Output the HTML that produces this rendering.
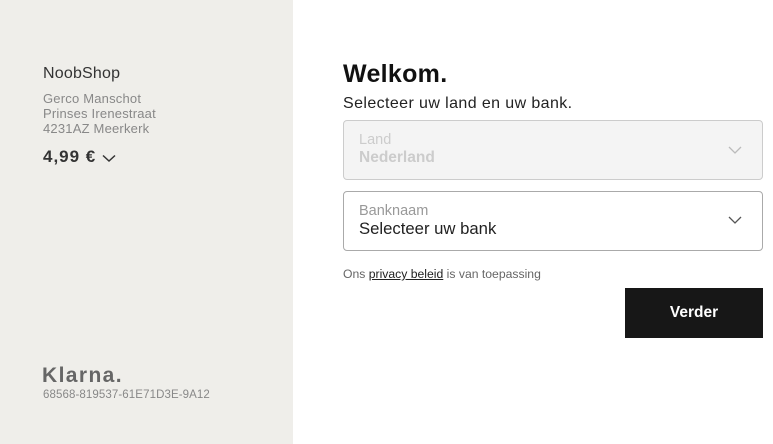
<!DOCTYPE html>
<html><head><meta charset="utf-8"><style>
*{margin:0;padding:0;box-sizing:border-box}
body{width:773px;height:444px;overflow:hidden;font-family:"Liberation Sans",sans-serif;background:#fff;position:relative}
.left{position:absolute;left:0;top:0;width:293px;height:444px;background:#efeeea}
.a{position:absolute;white-space:nowrap}
.box{position:absolute;left:343px;width:420px;border:1px solid #bbb;border-radius:4px}
.chev{position:absolute;right:20px;width:14px;height:8px}
</style></head><body>
<div class="left"></div>
<div class="a" style="left:43px;top:65px;font-size:16px;color:#333;letter-spacing:0.2px">NoobShop</div>
<div class="a" style="left:43px;top:91px;font-size:13px;color:#888;line-height:15px;letter-spacing:0.2px">Gerco Manschot<br>Prinses Irenestraat<br>4231AZ Meerkerk</div>
<div class="a" style="left:43px;top:147px;font-size:17px;font-weight:bold;color:#333;letter-spacing:1px">4,99 €</div>
<svg class="a" style="left:102px;top:154px" width="14" height="9" viewBox="0 0 14 9"><path d="M1 1.5L7 7L13 1.5" fill="none" stroke="#333" stroke-width="1.5"/></svg>
<div class="a" style="left:42px;top:364px;font-size:21px;font-weight:bold;color:#666;letter-spacing:1.4px">Klarna.</div>
<div class="a" style="left:43px;top:389px;font-size:11.5px;color:#888;letter-spacing:0.1px">68568-819537-61E71D3E-9A12</div>

<div class="a" style="left:343px;top:60px;font-size:25px;font-weight:bold;color:#111;letter-spacing:0.3px">Welkom.</div>
<div class="a" style="left:343px;top:95px;font-size:16px;color:#222;letter-spacing:0.4px">Selecteer uw land en uw bank.</div>

<div class="box" style="top:120px;height:60px;background:#f4f4f4;border-color:#ccc">
<div class="a" style="left:15px;top:11px;font-size:14.5px;color:#ccc">Land</div>
<div class="a" style="left:15px;top:28px;font-size:15.5px;font-weight:bold;color:#ccc">Nederland</div>
<svg class="chev" style="top:25px" viewBox="0 0 14 8"><path d="M1 1L7 7L13 1" fill="none" stroke="#bbb" stroke-width="1.3"/></svg>
</div>
<div class="box" style="top:191px;height:60px;border-color:#aaa">
<div class="a" style="left:15px;top:11px;font-size:14.5px;color:#999">Banknaam</div>
<div class="a" style="left:15px;top:27px;font-size:16.7px;color:#222">Selecteer uw bank</div>
<svg class="chev" style="top:24px" viewBox="0 0 14 8"><path d="M1 1L7 7L13 1" fill="none" stroke="#555" stroke-width="1.3"/></svg>
</div>
<div class="a" style="left:343px;top:267px;font-size:12.2px;color:#666">Ons <span style="color:#222;text-decoration:underline">privacy beleid</span> is van toepassing</div>
<div class="a" style="left:625px;top:288px;width:138px;height:50px;background:#171717;color:#fff;font-size:15.5px;font-weight:bold;display:flex;align-items:center;justify-content:center">Verder</div>
</body></html>
